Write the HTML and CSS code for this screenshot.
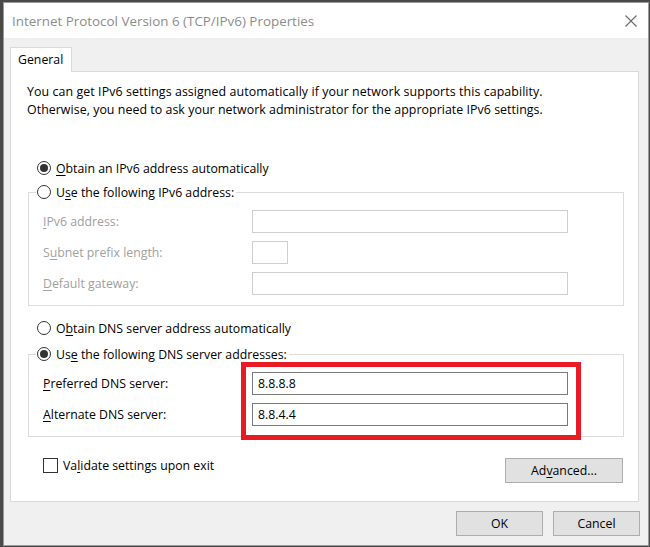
FILE: index.html
```html
<!DOCTYPE html>
<html>
<head>
<meta charset="utf-8">
<link rel="stylesheet" href="styles.css">
</head>
<body>
<div class="window">
  <div class="titlebar">
    <span class="title">Internet Protocol Version 6 (TCP/IPv6) Properties</span>
    <svg class="close" viewBox="0 0 12 12"><path d="M0.5 0.5L11.5 11.5M11.5 0.5L0.5 11.5" stroke="#6b6b6b" stroke-width="1.1" fill="none"/></svg>
  </div>
  <div class="content">
    <div class="tabs"><div class="tab">General</div></div>
    <div class="panel">
      <p class="intro"><span class="l1">You can get IPv6 settings assigned automatically if your network supports this capability.</span><br><span class="l2">Otherwise, you need to ask your network administrator for the appropriate IPv6 settings.</span></p>

      <div class="radio standalone first"><span class="circle on"></span><span><u>O</u>btain an IPv6 address automatically</span></div>

      <fieldset class="group">
        <legend><span class="radio"><span class="circle"></span><span>U<u>s</u>e the following IPv6 address:</span></span></legend>
        <div class="grid">
          <span class="lbl disabled"><u>I</u>Pv6 address:</span>
          <span class="field disabled"></span>
          <span class="lbl disabled">S<u>u</u>bnet prefix length:</span>
          <span class="field disabled short"></span>
          <span class="lbl disabled"><u>D</u>efault gateway:</span>
          <span class="field disabled"></span>
        </div>
      </fieldset>

      <div class="radio standalone second"><span class="circle"></span><span>O<u>b</u>tain DNS server address automatically</span></div>

      <fieldset class="group dns">
        <legend><span class="radio"><span class="circle on"></span><span>Us<u>e</u> the following DNS server addresses:</span></span></legend>
        <div class="grid">
          <span class="lbl row1"><u>P</u>referred DNS server:</span>
          <span class="field col2 row1">8.8.8.8</span>
          <span class="lbl row2"><u>A</u>lternate DNS server:</span>
          <span class="field col2 row2">8.8.4.4</span>
          <span class="highlight"></span>
        </div>
      </fieldset>

      <div class="footer-row">
        <div class="check"><span class="box"></span><span>Va<u>l</u>idate settings upon exit</span></div>
        <div class="btn advanced">Ad<u>v</u>anced...</div>
      </div>
    </div>
    <div class="buttons">
      <div class="btn">OK</div>
      <div class="btn">Cancel</div>
    </div>
  </div>
</div>
</body>
</html>
```
FILE: styles.css
```css
* { box-sizing: border-box; }
html, body { margin: 0; padding: 0; }
body {
  width: 650px;
  height: 547px;
  overflow: hidden;
  background: #4a4a4a;
  font-family: "Open Sans", "Noto Sans", sans-serif;
  font-size: 12.3px;
  color: #000;
}
u { text-decoration: underline; text-underline-offset: 2px; text-decoration-thickness: 1px; }

.window {
  margin: 2px 0 0 3px;
  width: 646px;
  height: 544px;
  border: 1px solid #9a9a9a;
  background: #f0f0f0;
  display: flex;
  flex-direction: column;
}
.titlebar {
  flex: none;
  height: 35px;
  background: #fff;
  display: flex;
  align-items: center;
  justify-content: space-between;
  padding: 0 11px 0 8px;
}
.title { font-size: 13.4px; color: #8c8c8c; }
.close { width: 12px; height: 12px; }

.content {
  flex: none;
  padding: 9px 9px 9px 6px;
  display: flex;
  flex-direction: column;
}
.tabs { display: flex; height: 24px; flex: none; }
.tab {
  height: 25px;
  width: 62px;
  background: #fff;
  border: 1px solid #d9d9d9;
  border-bottom: none;
  padding-left: 7px;
  line-height: 24px;
  position: relative;
  z-index: 1;
}
.panel {
  flex: none;
  background: #fff;
  border: 1px solid #d9d9d9;
  padding: 11px 14px 18px 16px;
  display: flex;
  flex-direction: column;
}
.intro { margin: 0; line-height: 18px; font-size: 12.4px; }
.intro .l1 { letter-spacing: 0.08px; }
.intro .l2 { letter-spacing: 0.04px; }

.radio {
  display: flex;
  align-items: center;
  height: 18px;
  gap: 5px;
}
.radio.standalone { margin-left: 10px; }
.radio.first { margin-top: 40px; }
.radio.second { margin-top: 13px; }
.circle {
  width: 14px;
  height: 14px;
  border: 1px solid #333;
  border-radius: 50%;
  background: #fff;
  display: flex;
  align-items: center;
  justify-content: center;
  flex: none;
}
.circle.on::after {
  content: "";
  width: 8px;
  height: 8px;
  border-radius: 50%;
  background: #333;
}

.group {
  margin: 6px 0 0 1px;
  padding: 0;
  border: 1px solid #dcdcdc;
  min-width: 0;
}
.group.dns { margin-top: 8px; }
.group legend {
  margin-left: 7px;
  padding: 0 2px 0 1px;
  height: 18px;
}
.grid {
  display: grid;
  grid-template-columns: 209px 316px;
  grid-auto-rows: 23px;
  row-gap: 8px;
  align-items: center;
  padding: 9px 0 10px 14px;
}
.lbl { grid-column: 1; }
.col2 { grid-column: 2; }
.row1 { grid-row: 1; }
.row2 { grid-row: 2; }
.lbl.disabled { color: #a0a0a0; }
.field {
  height: 23px;
  border: 1px solid #7a7a7a;
  background: #fff;
  padding-left: 5px;
  line-height: 21px;
}
.field.disabled { border-color: #cfcfcf; }
.field.short { width: 36px; }
.highlight {
  grid-column: 2;
  grid-row: 1 / 3;
  align-self: stretch;
  margin: -10px -13px -14px -11px;
  border: 5px solid #e81a24;
  z-index: 2;
}

.footer-row {
  margin-top: 21px;
  display: flex;
  justify-content: space-between;
  align-items: flex-start;
}
.check {
  display: flex;
  align-items: center;
  gap: 5px;
  margin: -1px 0 0 16px;
  height: 16px;
}
.box {
  width: 15px;
  height: 15px;
  border: 1px solid #333;
  background: #fff;
}
.btn {
  width: 87px;
  height: 25px;
  background: #e1e1e1;
  border: 1px solid #adadad;
  display: flex;
  align-items: center;
  justify-content: center;
}
.btn.advanced { width: 118px; margin-right: 1px; }
.buttons {
  margin-top: 9px;
  margin-right: -1px;
  display: flex;
  justify-content: flex-end;
  gap: 10px;
}
```
